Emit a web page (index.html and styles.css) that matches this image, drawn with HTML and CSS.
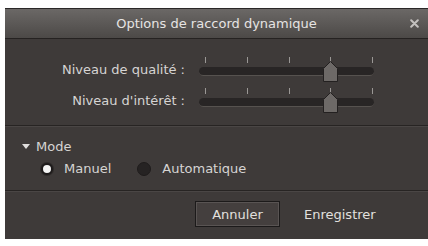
FILE: index.html
```html
<!DOCTYPE html>
<html>
<head>
<meta charset="utf-8">
<link rel="stylesheet" href="styles.css">
</head>
<body>
<div class="dialog">
  <div class="titlebar">
    <span class="title">Options de raccord dynamique</span>
    <svg class="close" width="9" height="9" viewBox="0 0 9 9"><path d="M1.2 1.2 L7.8 7.8 M7.8 1.2 L1.2 7.8" stroke="#c4c1bf" stroke-width="2" stroke-linecap="round"/></svg>
  </div>
  <div class="levels">
    <div class="row">
      <span class="label">Niveau de qualité :</span>
      <div class="slider">
        <div class="ticks"><i></i><i></i><i></i><i></i><i></i></div>
        <div class="track"></div>
        <svg class="thumb" width="15" height="21" viewBox="0 0 15 21"><path d="M7.5 0.5 L14.5 7.5 L14.5 20.5 L0.5 20.5 L0.5 7.5 Z" fill="#6d6967" stroke="#232020"/></svg>
      </div>
    </div>
    <div class="row">
      <span class="label">Niveau d'intérêt :</span>
      <div class="slider">
        <div class="ticks"><i></i><i></i><i></i><i></i><i></i></div>
        <div class="track"></div>
        <svg class="thumb" width="15" height="21" viewBox="0 0 15 21"><path d="M7.5 0.5 L14.5 7.5 L14.5 20.5 L0.5 20.5 L0.5 7.5 Z" fill="#6d6967" stroke="#232020"/></svg>
      </div>
    </div>
  </div>
  <div class="mode">
    <div class="mode-head"><span class="tri"></span><span>Mode</span></div>
    <div class="radios">
      <span class="radio on"></span><span class="rlabel">Manuel</span>
      <span class="radio off"></span><span class="rlabel">Automatique</span>
    </div>
  </div>
  <div class="footer">
    <span class="btn">Annuler</span>
    <span class="btn plain">Enregistrer</span>
  </div>
</div>
</body>
</html>
```
FILE: styles.css
```css
html, body { margin: 0; padding: 0; background: #ffffff; }
body { font-family: "DejaVu Sans", "Liberation Sans", sans-serif; }
.dialog {
  margin: 8px 0 0 5px;
  width: 423px;
  height: 231px;
  background: #3e3a39;
  display: flex;
  flex-direction: column;
  color: #d6d4d3;
  font-size: 13px;
}
.titlebar {
  height: 29px;
  border-top: 1px solid #2a2827;
  border-bottom: 1px solid #252221;
  background: linear-gradient(#6b6866, #4c4947);
  display: flex;
  align-items: center;
  justify-content: center;
  position: relative;
  flex: none;
}
.title { color: #e6e4e3; font-size: 13px; }
.close {
  position: absolute;
  right: 9px;
  top: 10px;
}
.levels {
  height: 87px;
  border-bottom: 1px solid #272423;
  box-shadow: 0 1px 0 #4a4645;
  display: flex;
  flex-direction: column;
  padding-top: 18px;
  box-sizing: border-box;
  gap: 4px;
  flex: none;
}
.row { display: flex; align-items: flex-end; height: 27px; }
.label { width: 180px; text-align: right; padding-bottom: 7px; }
.slider { position: relative; margin-left: 14px; width: 175px; height: 27px; }
.ticks {
  display: flex;
  justify-content: space-between;
  padding: 0 1px 0 6px;
  height: 6px;
}
.ticks i { display: block; width: 1px; height: 6px; background: #9a9795; }
.track {
  margin-top: 4px;
  height: 8px;
  border-radius: 5px;
  background: #282525;
  border-bottom: 1px solid #56524f;
}
.thumb { position: absolute; left: 124px; top: 4px; }
.mode {
  height: 65px;
  border-bottom: 1px solid #272423;
  box-shadow: 0 1px 0 #4a4645;
  box-sizing: border-box;
  padding: 13px 0 0 17px;
  flex: none;
}
.mode-head { display: flex; align-items: center; gap: 6px; }
.tri {
  width: 0; height: 0;
  border-left: 4px solid transparent;
  border-right: 4px solid transparent;
  border-top: 5px solid #e0dedd;
}
.radios { display: flex; align-items: center; margin: 7px 0 0 19px; }
.radio { width: 12px; height: 12px; border-radius: 50%; box-sizing: border-box; }
.radio.on { background: #f4f4f4; border: 2px solid #1d1a1a; box-shadow: 0 0 0 1px #2e2b2a; }
.radio.off { background: #262323; border: 1px solid #1f1c1c; width: 14px; height: 14px; margin-left: 26px; }
.rlabel { margin-left: 11px; }
.footer {
  flex: 1;
  display: flex;
  align-items: center;
  padding-left: 190px;
  padding-bottom: 2px;
  gap: 18px;
}
.btn {
  width: 85px;
  height: 26px;
  box-sizing: border-box;
  display: flex;
  align-items: center;
  justify-content: center;
  border: 1px solid #1c1a1a;
  background: #443f3e;
  box-shadow: inset 0 0 0 1px #595453;
  color: #e2e0df;
}
.btn.plain { border: none; background: none; box-shadow: none; width: auto; padding: 0 6px; }
```
